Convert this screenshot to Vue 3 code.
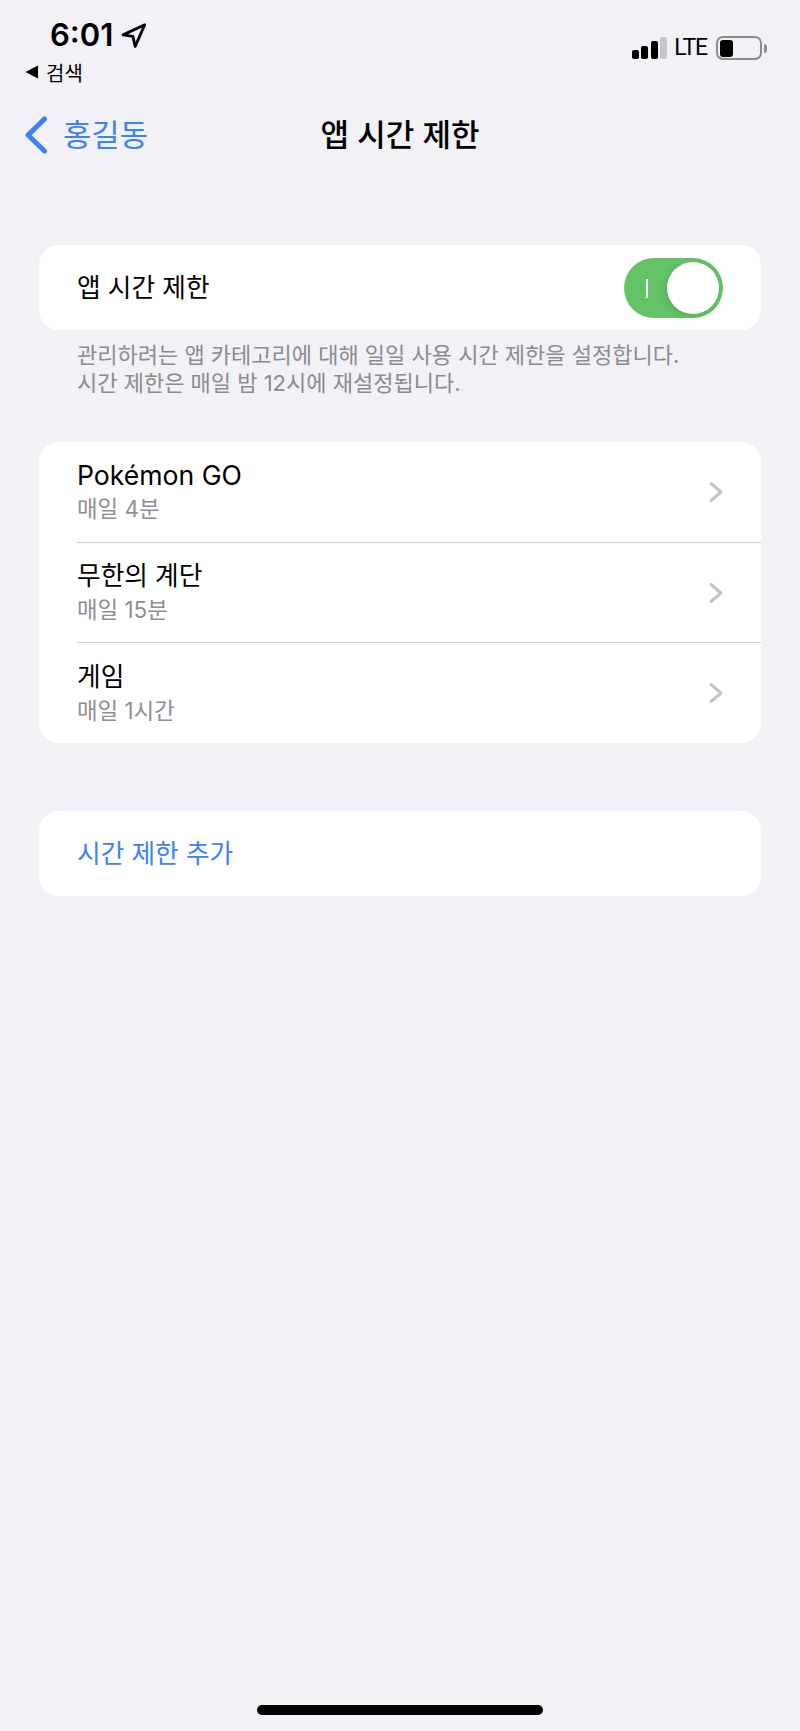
<script setup>
const rows = [
  { name: 'Pokémon GO', limit: '매일 4분', latin: true },
  { name: '무한의 계단', limit: '매일 15분' },
  { name: '게임', limit: '매일 1시간' },
]
</script>

<template>
  <div class="page">
    <header class="status">
      <div class="status-left">
        <div class="clock">
          <span class="time">6:01</span>
          <svg class="loc" width="27" height="27" viewBox="0 0 26 26" aria-hidden="true">
            <path d="M23.8 2.6 3 12.4 12.4 13.9 14.6 23.6Z" fill="none" stroke="#000" stroke-width="2.7" stroke-linejoin="round" />
          </svg>
        </div>
        <div class="crumb">
          <svg width="14" height="14" viewBox="0 0 14 14" aria-hidden="true"><path d="M13 .5V13.5L.5 7Z" fill="#000" /></svg>
          <span>검색</span>
        </div>
      </div>
      <div class="status-right">
        <div class="signal">
          <i class="b1"></i><i class="b2"></i><i class="b3"></i><i class="b4"></i>
        </div>
        <span class="lte">LTE</span>
        <div class="battery"><i></i></div>
        <div class="cap"></div>
      </div>
    </header>

    <nav class="nav">
      <div class="back">
        <svg width="24" height="38" viewBox="0 0 24 38" aria-hidden="true">
          <path d="M20.5 3 4 19 20.5 35" fill="none" stroke="#3a82f7" stroke-width="5" stroke-linecap="round" stroke-linejoin="round" />
        </svg>
        <span>홍길동</span>
      </div>
      <h1 class="title">앱 시간 제한</h1>
      <div></div>
    </nav>

    <section class="card single">
      <span class="label">앱 시간 제한</span>
      <div class="toggle">
        <i class="mark"></i>
        <i class="knob"></i>
      </div>
    </section>
    <p class="note">관리하려는 앱 카테고리에 대해 일일 사용 시간 제한을 설정합니다.<br />시간 제한은 매일 밤 12시에 재설정됩니다.</p>

    <section class="card list">
      <div v-for="row in rows" :key="row.name" class="row">
        <div class="row-text">
          <span class="label" :class="{ latin: row.latin }">{{ row.name }}</span>
          <span class="limit">{{ row.limit }}</span>
        </div>
        <svg class="chev" width="16" height="22" viewBox="0 0 16 22" aria-hidden="true">
          <path d="M3 2.5 13 11 3 19.5" fill="none" stroke="#c4c4c7" stroke-width="3" stroke-linecap="round" stroke-linejoin="round" />
        </svg>
      </div>
    </section>

    <section class="card single add">
      <span class="label blue">시간 제한 추가</span>
    </section>

    <div class="home"></div>
  </div>
</template>

<style>
html, body { background: #f1f1f6; }
</style>

<style scoped>
.page {
  width: 800px;
  height: 1731px;
  box-sizing: border-box;
  display: flex;
  flex-direction: column;
  background: #f1f1f6;
  color: #000;
  font-family: Inter, "Noto Sans CJK KR", sans-serif;
  overflow: hidden;
}
.status {
  height: 100px;
  display: flex;
  justify-content: space-between;
  padding: 16px 33px 0 25px;
  box-sizing: border-box;
}
.status-left { display: flex; flex-direction: column; }
.clock { display: flex; align-items: center; gap: 7px; padding-left: 25px; height: 38px; }
.time { font-size: 31px; font-weight: 600; line-height: 38px; }
.crumb { display: flex; align-items: center; gap: 7px; height: 30px; margin-top: 3px; font-size: 20px; font-weight: 400; }
.status-right { display: flex; align-items: center; height: 26px; margin-top: 19px; }
.signal { display: flex; align-items: flex-end; gap: 2.5px; height: 22px; }
.signal i { display: block; width: 7px; border-radius: 2px; background: #000; }
.signal .b1 { height: 9px; }
.signal .b2 { height: 13px; }
.signal .b3 { height: 18px; }
.signal .b4 { height: 22px; background: #c6c6c9; }
.lte {
  margin-left: 7px;
  font-family: Roboto, sans-serif;
  font-size: 23px;
  font-weight: 400;
  letter-spacing: -1.1px;
  line-height: 26px;
}
.battery {
  margin-left: 9px;
  width: 46px;
  height: 24px;
  box-sizing: border-box;
  border: 2px solid #8c8c90;
  border-radius: 7px;
  padding: 1.5px 2px;
}
.battery i { display: block; width: 13px; height: 17px; background: #000; border-radius: 3px; }
.cap { width: 3px; height: 9px; margin-left: 2px; background: #8c8c90; border-radius: 0 3px 3px 0; }
.nav {
  height: 70px;
  display: grid;
  grid-template-columns: 1fr auto 1fr;
  align-items: center;
}
.back {
  display: flex;
  align-items: center;
  gap: 15px;
  padding-left: 24px;
  color: #3a82f7;
  font-size: 30.8px;
  line-height: 38px;
}
.title { margin: 0; font-size: 31px; font-weight: 500; line-height: 38px; }
.card {
  margin: 0 39px;
  background: #fff;
  border-radius: 20px;
}
.single {
  height: 85px;
  box-sizing: border-box;
  padding: 1px 38px 0;
  display: flex;
  align-items: center;
  justify-content: space-between;
  margin-top: 75px;
}
.label { font-size: 25.7px; line-height: 34px; }
.latin { font-size: 26.6px; }
.blue { color: #3a82f7; }
.toggle {
  position: relative;
  width: 99px;
  height: 60px;
  border-radius: 30px;
  background: #62c466;
}
.mark { position: absolute; left: 22px; top: 21px; width: 2px; height: 19px; background: #fff; }
.knob {
  position: absolute;
  right: 4px;
  top: 4px;
  width: 52px;
  height: 52px;
  border-radius: 50%;
  background: #fff;
  box-shadow: -2px 2px 6px rgba(0, 0, 0, 0.12);
}
.note {
  margin: 11px 39px 0 77px;
  color: #8b8b90;
  font-size: 22px;
  line-height: 28px;
  height: 101px;
}
.list { height: 301px; display: flex; flex-direction: column; overflow: hidden; }
.row {
  flex: 1;
  margin-left: 38px;
  padding-right: 37px;
  display: flex;
  align-items: center;
  justify-content: space-between;
  border-bottom: 1px solid #cfcfd2;
}
.row:last-child { border-bottom: 0; }
.row-text { display: flex; flex-direction: column; gap: 1px; }
.limit { font-size: 22.4px; line-height: 32px; color: #8e8e93; }
.add { margin-top: 68px; }
.home {
  width: 286px;
  height: 10px;
  margin: auto auto 16px;
  border-radius: 5px;
  background: #000;
}
</style>
